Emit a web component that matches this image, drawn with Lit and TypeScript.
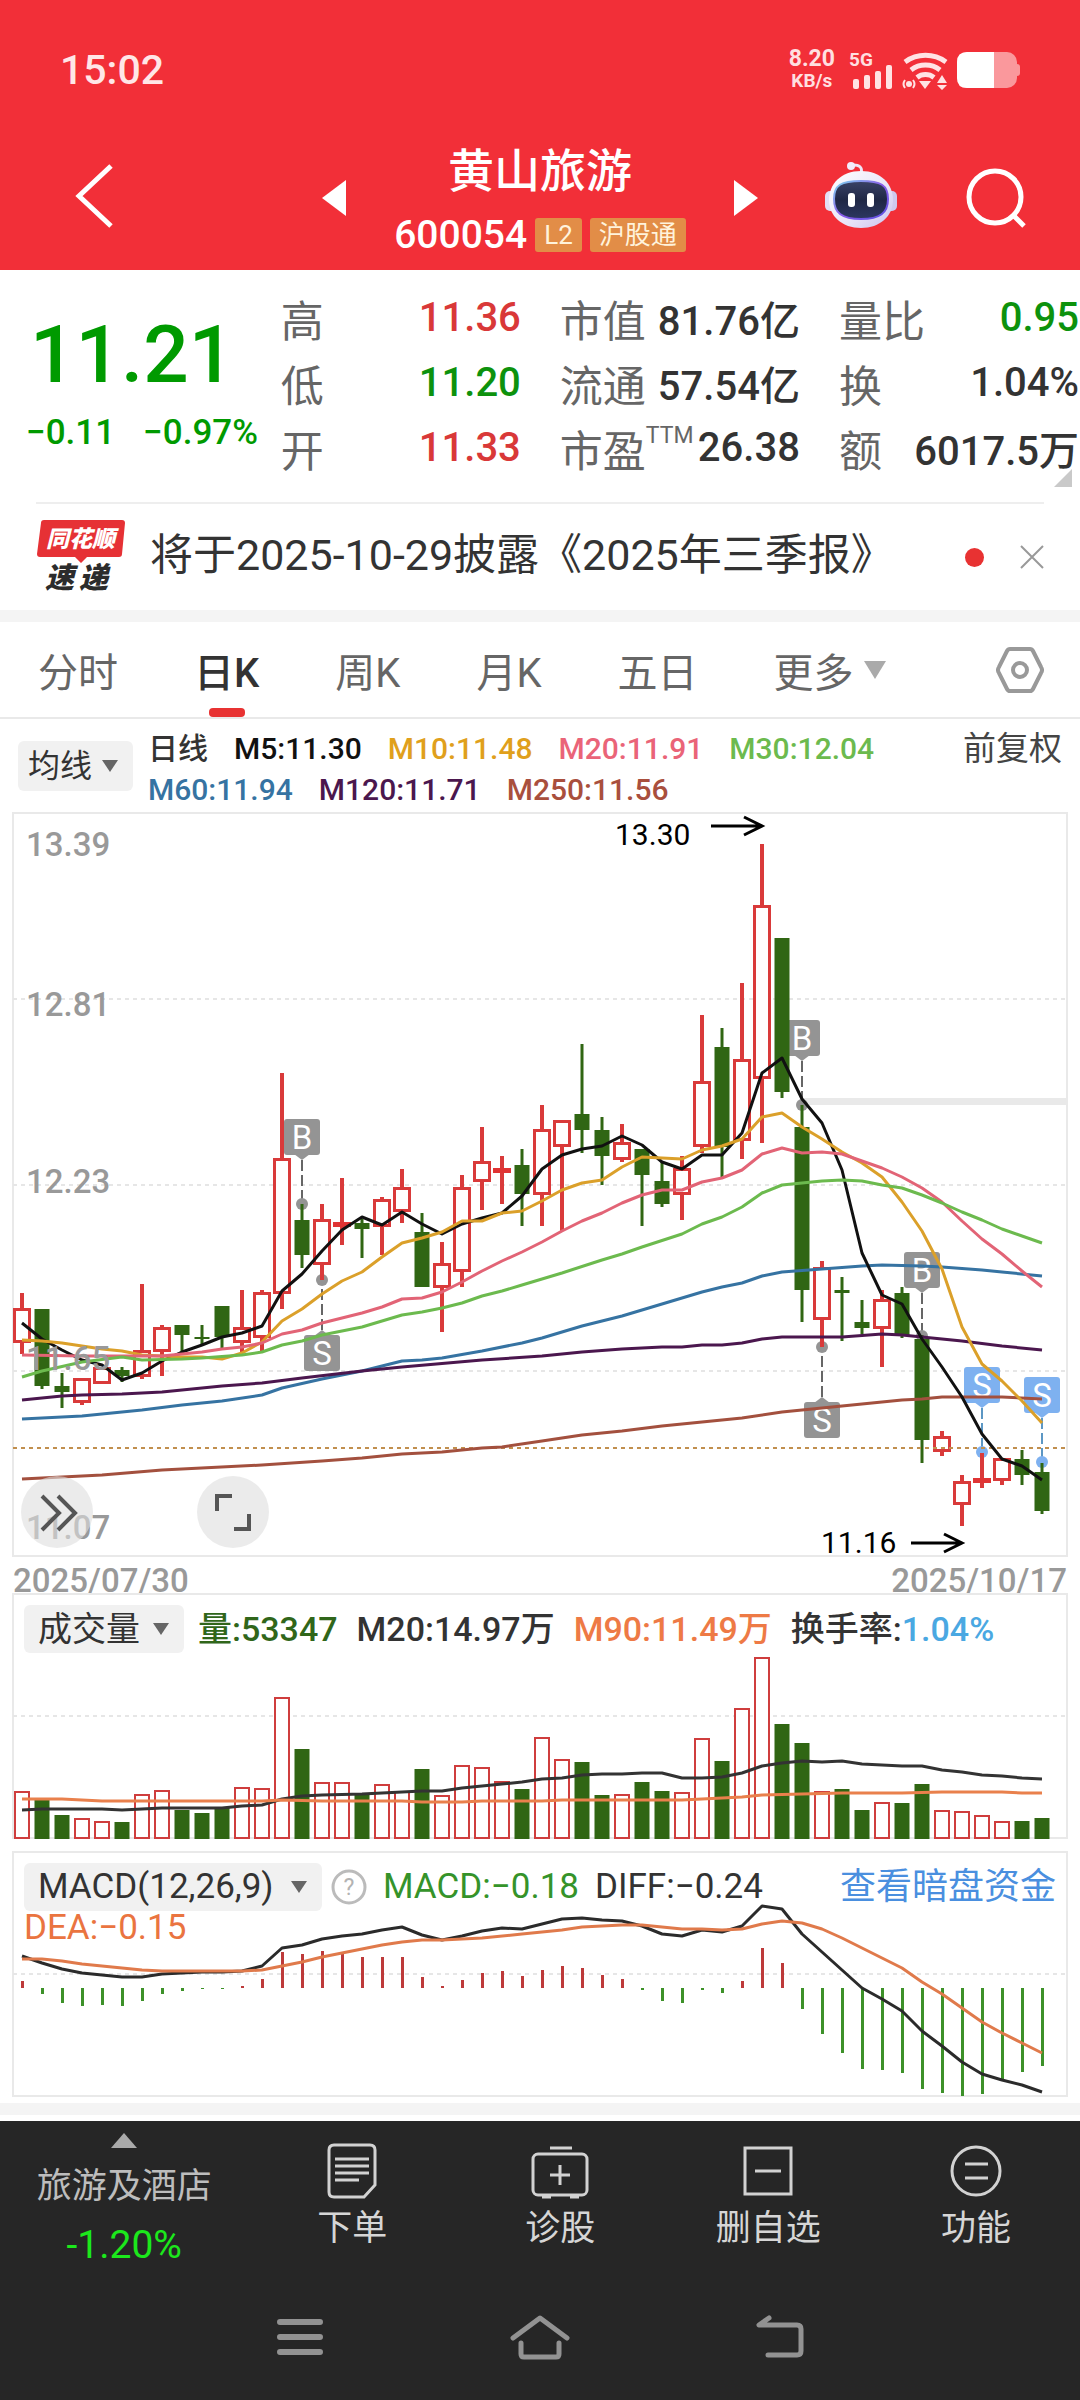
import { LitElement, html, svg, css } from "lit";
import { customElement } from "lit/decorators.js";

type Candle = [kind: "r" | "g", high: number, top: number, bottom: number, low: number];
type Point = [index: number, y: number];

const STEP = 20;
const cx = (i: number) => 22 + STEP * i;

const CANDLES: Candle[] = [
  ["r", 1293, 1308, 1343, 1354], ["g", 1309, 1309, 1386, 1389], ["g", 1373, 1386, 1392, 1408],
  ["r", 1378, 1378, 1403, 1405], ["r", 1367, 1367, 1384, 1384], ["g", 1367, 1370, 1376, 1382],
  ["r", 1284, 1350, 1377, 1379], ["r", 1325, 1327, 1352, 1376], ["g", 1325, 1325, 1335, 1353],
  ["g", 1325, 1337, 1339, 1344], ["g", 1306, 1306, 1337, 1348], ["r", 1290, 1327, 1343, 1352],
  ["r", 1290, 1292, 1338, 1353], ["r", 1073, 1158, 1294, 1309], ["g", 1204, 1220, 1255, 1268],
  ["r", 1204, 1219, 1265, 1280], ["r", 1178, 1222, 1227, 1245], ["g", 1219, 1223, 1229, 1258],
  ["r", 1197, 1199, 1227, 1255], ["r", 1169, 1187, 1212, 1223], ["g", 1213, 1232, 1287, 1287],
  ["r", 1242, 1263, 1288, 1332], ["r", 1175, 1187, 1272, 1287], ["r", 1127, 1161, 1182, 1210],
  ["r", 1156, 1168, 1173, 1204], ["g", 1149, 1165, 1194, 1226], ["r", 1105, 1129, 1195, 1226],
  ["r", 1120, 1120, 1147, 1231], ["g", 1044, 1114, 1130, 1153], ["g", 1117, 1130, 1156, 1185],
  ["r", 1124, 1142, 1160, 1162], ["g", 1149, 1149, 1175, 1226], ["g", 1162, 1181, 1204, 1207],
  ["r", 1156, 1168, 1195, 1220], ["r", 1015, 1081, 1147, 1153], ["g", 1028, 1047, 1147, 1177],
  ["r", 983, 1059, 1141, 1159], ["r", 844, 905, 1079, 1143], ["g", 938, 938, 1092, 1098],
  ["g", 1105, 1127, 1290, 1322], ["r", 1261, 1267, 1320, 1347], ["g", 1277, 1290, 1293, 1341],
  ["g", 1300, 1322, 1328, 1334], ["r", 1290, 1299, 1329, 1367], ["g", 1287, 1293, 1335, 1338],
  ["g", 1335, 1339, 1440, 1463], ["r", 1431, 1436, 1452, 1456], ["r", 1475, 1481, 1505, 1526],
  ["r", 1453, 1478, 1483, 1488], ["r", 1458, 1458, 1481, 1485], ["g", 1450, 1459, 1475, 1485],
  ["g", 1463, 1472, 1511, 1514],
];

const every = (...ys: number[]): Point[] => ys.map((y, i) => [i, y]);

const AVERAGES: { color: string; points: Point[] }[] = [
  {
    color: "#a3503e",
    points: [[0, 1479], [4, 1475], [7, 1470], [12, 1465], [15, 1461], [17, 1458], [19, 1454], [21, 1452],
      [23, 1448], [24, 1447], [26, 1441], [28, 1435], [30, 1431], [32, 1426], [34, 1422], [36, 1418],
      [38, 1412], [40, 1408], [42, 1404], [44, 1400], [45, 1399], [46, 1397], [49, 1397], [51, 1399]],
  },
  {
    color: "#3673a2",
    points: [[0, 1419], [3, 1416], [6, 1410], [8, 1405], [10, 1401], [12, 1395], [13, 1388], [15, 1379],
      [17, 1371], [19, 1361], [20, 1360], [21, 1358], [23, 1351], [25, 1343], [26, 1338], [28, 1326],
      [30, 1316], [32, 1304], [34, 1292], [35, 1287], [36, 1283], [37, 1276], [38, 1272], [40, 1269],
      [42, 1266], [43, 1265], [45, 1266], [46, 1267], [48, 1270], [49, 1272], [51, 1276]],
  },
  {
    color: "#4b174e",
    points: [[0, 1400], [2, 1396], [3, 1395], [5, 1394], [7, 1392], [10, 1386], [12, 1383], [14, 1378],
      [17, 1371], [19, 1367], [23, 1360], [26, 1356], [28, 1352], [30, 1349], [32, 1347], [33, 1347],
      [34, 1345], [35, 1345], [36, 1343], [37, 1339], [38, 1337], [41, 1337], [43, 1334], [44, 1335],
      [45, 1337], [47, 1341], [49, 1346], [51, 1350]],
  },
  {
    color: "#111111",
    points: every(1323, 1339, 1350, 1360, 1365, 1380, 1373, 1361, 1352, 1345, 1337, 1333, 1326, 1291, 1274,
      1251, 1230, 1217, 1225, 1212, 1224, 1234, 1224, 1218, 1213, 1196, 1169, 1155, 1149, 1146, 1136, 1145,
      1162, 1169, 1155, 1155, 1133, 1073, 1058, 1099, 1123, 1170, 1253, 1295, 1304, 1339, 1367, 1397, 1434,
      1459, 1466, 1480),
  },
  {
    color: "#dba02a",
    points: every(1340, 1341, 1343, 1346, 1349, 1351, 1355, 1356, 1357, 1357, 1359, 1353, 1342, 1321, 1309,
      1294, 1281, 1272, 1257, 1243, 1238, 1232, 1221, 1221, 1213, 1211, 1201, 1190, 1183, 1180, 1167, 1157,
      1158, 1159, 1150, 1146, 1139, 1117, 1113, 1127, 1139, 1152, 1163, 1177, 1202, 1231, 1269, 1327, 1364,
      1381, 1401, 1423),
  },
  {
    color: "#e26476",
    points: [[0, 1355], [3, 1356], [7, 1356], [8, 1354], [9, 1352], [10, 1349], [11, 1347], [12, 1343],
      [13, 1334], [14, 1330], [15, 1323], [17, 1313], [18, 1307], [19, 1299], [20, 1298], [21, 1292],
      [22, 1282], [23, 1271], [24, 1261], [25, 1252], [26, 1242], [27, 1231], [28, 1221], [29, 1213],
      [30, 1203], [31, 1195], [32, 1190], [33, 1190], [34, 1182], [35, 1178], [36, 1170], [37, 1154],
      [38, 1148], [39, 1153], [40, 1152], [41, 1154], [42, 1161], [43, 1168], [44, 1177], [45, 1188],
      [46, 1202], [47, 1221], [48, 1239], [49, 1254], [50, 1271], [51, 1287]],
  },
  {
    color: "#6cba4e",
    points: [[0, 1377], [1, 1371], [3, 1362], [5, 1357], [6, 1360], [8, 1359], [9, 1358], [11, 1355],
      [12, 1352], [13, 1345], [14, 1341], [15, 1335], [17, 1327], [18, 1321], [19, 1315], [20, 1312],
      [21, 1308], [22, 1303], [23, 1296], [24, 1291], [25, 1285], [26, 1279], [27, 1273], [29, 1260],
      [30, 1254], [31, 1247], [33, 1234], [34, 1224], [35, 1217], [36, 1207], [37, 1193], [38, 1185],
      [39, 1183], [40, 1181], [41, 1180], [42, 1181], [43, 1185], [44, 1188], [45, 1195], [46, 1203],
      [47, 1212], [48, 1220], [49, 1229], [50, 1236], [51, 1243]],
  },
];

const TRADES: { i: number; side: "B" | "S"; box: number; dot: number; blue?: boolean }[] = [
  { i: 14, side: "B", box: 1119, dot: 1204 },
  { i: 15, side: "S", box: 1335, dot: 1280 },
  { i: 39, side: "B", box: 1020, dot: 1105 },
  { i: 40, side: "S", box: 1402, dot: 1347 },
  { i: 45, side: "B", box: 1252, dot: 1336 },
  { i: 48, side: "S", box: 1367, dot: 1452, blue: true },
  { i: 51, side: "S", box: 1377, dot: 1462, blue: true },
];

const VOLUME_TOPS = [
  1791, 1800, 1815, 1818, 1821, 1822, 1794, 1790, 1810, 1813, 1808, 1787, 1788, 1697, 1749, 1782, 1782, 1795,
  1784, 1791, 1769, 1795, 1765, 1767, 1781, 1789, 1737, 1759, 1762, 1795, 1794, 1782, 1791, 1792, 1738, 1761,
  1708, 1657, 1724, 1743, 1791, 1789, 1810, 1802, 1803, 1784, 1810, 1811, 1815, 1821, 1821, 1818,
];
const VOLUME_M20: Point[] = [
  [0, 1810], [1, 1809], [4, 1809], [5, 1810], [7, 1808], [10, 1808], [11, 1806], [12, 1805], [13, 1799],
  [14, 1796], [15, 1795], [17, 1794], [18, 1793], [20, 1791], [21, 1791], [22, 1788], [24, 1784], [25, 1782],
  [26, 1779], [27, 1778], [28, 1775], [29, 1774], [30, 1774], [31, 1773], [32, 1773], [33, 1778], [34, 1778],
  [35, 1777], [36, 1773], [37, 1766], [38, 1763], [39, 1761], [40, 1762], [41, 1761], [42, 1764], [44, 1766],
  [45, 1766], [46, 1770], [47, 1772], [48, 1775], [49, 1776], [50, 1778], [51, 1779],
];
const VOLUME_M90: Point[] = [
  [0, 1799], [2, 1799], [4, 1801], [12, 1801], [13, 1800], [15, 1801], [19, 1801], [20, 1802], [22, 1802],
  [23, 1801], [26, 1801], [27, 1800], [33, 1800], [34, 1799], [36, 1797], [37, 1795], [39, 1794], [41, 1793],
  [44, 1793], [46, 1792], [49, 1792], [50, 1793], [51, 1793],
];

const MACD_ZERO = 1988;
const MACD_ENDS = [
  1981, 1994, 2003, 2006, 2005, 2006, 2001, 1994, 1991, 1989, 1989, 1986, 1979, 1952, 1954, 1951, 1954, 1957,
  1957, 1957, 1977, 1986, 1980, 1973, 1971, 1976, 1970, 1966, 1968, 1975, 1979, 1990, 2001, 2003, 1990, 1993,
  1981, 1948, 1963, 2009, 2034, 2053, 2069, 2070, 2073, 2089, 2093, 2096, 2094, 2081, 2072, 2066,
];
const DIFF = every(1956, 1963, 1969, 1973, 1975, 1977, 1977, 1974, 1973, 1972, 1972, 1971, 1966, 1948, 1945,
  1939, 1936, 1934, 1930, 1927, 1935, 1940, 1936, 1931, 1928, 1929, 1924, 1919, 1918, 1920, 1921, 1926, 1934,
  1936, 1930, 1932, 1926, 1906, 1909, 1934, 1952, 1970, 1988, 1999, 2011, 2031, 2046, 2062, 2074, 2080, 2085,
  2092);
const DEA: Point[] = [
  [0, 1959], [1, 1959], [2, 1961], [3, 1964], [4, 1966], [5, 1968], [6, 1970], [7, 1971], [11, 1971],
  [12, 1970], [13, 1966], [14, 1962], [15, 1957], [16, 1953], [17, 1949], [18, 1945], [19, 1942], [20, 1940],
  [21, 1940], [23, 1938], [25, 1934], [27, 1930], [28, 1927], [30, 1925], [31, 1925], [32, 1927], [33, 1929],
  [34, 1929], [35, 1930], [36, 1929], [37, 1924], [38, 1921], [39, 1923], [40, 1929], [41, 1938], [42, 1948],
  [43, 1958], [44, 1968], [45, 1982], [46, 1994], [47, 2008], [48, 2022], [49, 2033], [50, 2043], [51, 2053],
];

const polyline = (points: Point[], color: string, width = 3) => svg`
  <polyline points=${points.map(([i, y]) => `${cx(i)},${y}`).join(" ")} fill="none" stroke=${color}
    stroke-width=${width} stroke-linejoin="round"></polyline>`;

const gridLine = (y: number) => svg`
  <line x1="13" x2="1067" y1=${y} y2=${y} stroke="#e6e6e6" stroke-width="2" stroke-dasharray="4 4"></line>`;

const frame = (top: number, bottom: number) => svg`
  <rect x="13" y=${top} width="1054" height=${bottom - top} fill="none" stroke="#e9e9e9" stroke-width="2"></rect>`;

const reset = css`
  :host {
    display: block;
  }
  button,
  select {
    margin: 0;
    padding: 0;
    border: 0;
    background: none;
    color: inherit;
    font: inherit;
  }
  a {
    color: inherit;
    text-decoration: none;
  }
  svg {
    display: block;
  }
`;

const picker = css`
  .picker {
    display: grid;
    align-items: center;
    border-radius: 6px;
    background: #f1f1f1;
    color: #333;
  }
  .picker select {
    grid-area: 1 / 1;
    height: 48px;
    appearance: none;
    outline: none;
  }
  .picker svg {
    grid-area: 1 / 1;
    justify-self: end;
    margin-right: 14px;
    pointer-events: none;
  }
`;

const pickerArrow = html`<svg width="18" height="14" viewBox="0 0 18 14" aria-hidden="true">
  <path d="M1 1h16L9 13z" fill="#666"></path>
</svg>`;

@customElement("stock-header")
class StockHeader extends LitElement {
  static styles = [
    reset,
    css`
      :host {
        background: #f22f38;
        color: #fff;
      }
      .status {
        display: flex;
        align-items: center;
        justify-content: space-between;
        height: 140px;
        padding: 0 56px 0 60px;
      }
      .time {
        font-size: 41px;
        font-weight: 500;
        color: #ffe6e7;
      }
      .tray {
        display: flex;
        align-items: center;
        gap: 13px;
        color: #ffdfe0;
        font-weight: 700;
      }
      .speed {
        display: flex;
        flex-direction: column;
        align-items: center;
        font-size: 23px;
        line-height: 22px;
      }
      .speed .unit {
        font-size: 19px;
      }
      .bar {
        display: grid;
        grid-template-columns: 1fr auto 1fr;
        height: 130px;
      }
      .icon {
        display: grid;
        place-items: center;
        height: 116px;
      }
      .left {
        padding-left: 66px;
      }
      .right {
        display: flex;
        justify-content: flex-end;
        gap: 61px;
        padding-right: 47px;
      }
      .switch {
        display: flex;
        gap: 48px;
      }
      .name {
        display: flex;
        flex-direction: column;
        align-items: center;
      }
      .title {
        margin: 0;
        font-size: 46px;
        font-weight: 500;
        line-height: 62px;
      }
      .code {
        display: flex;
        align-items: center;
        gap: 8px;
        height: 66px;
        font-size: 39px;
        font-weight: 500;
      }
      .tag {
        padding: 0 9px;
        border-radius: 3px;
        background: #e28d47;
        color: #fff3dc;
        font-size: 26px;
        font-weight: 400;
        line-height: 34px;
      }
    `,
  ];

  render() {
    return html`
      <div class="status">
        <span class="time">15:02</span>
        <div class="tray">
          <span class="speed"><span>8.20</span><span class="unit">KB/s</span></span>
          <svg width="176" height="44" viewBox="848 49 176 44" aria-label="5G">
            <text x="849" y="67" font-size="19" fill="#ffdfe0">5G</text>
            <g fill="#ffe3e4">
              <rect x="853" y="80" width="6" height="10" rx="2"></rect>
              <rect x="864" y="76" width="6" height="14" rx="2"></rect>
              <rect x="875" y="72" width="6" height="18" rx="2"></rect>
              <rect x="886" y="66" width="6" height="24" rx="2"></rect>
              <path d="M919 82h12l-6 8z"></path>
              <path d="M937 84l5-8 5 8zM937 86h10l-5 5z"></path>
              <circle cx="909" cy="85" r="3"></circle>
            </g>
            <g fill="none" stroke="#ffe3e4" stroke-width="5">
              <path d="M905 63A35 35 0 0 1 946 63"></path>
              <path d="M911 71A24 24 0 0 1 940 71"></path>
              <path d="M917 78.500A14 14 0 0 1 934 78.500"></path>
            </g>
            <path d="M905 81q-3 4 0 8M913 81q3 4 0 8" fill="none" stroke="#ffe3e4" stroke-width="2"></path>
            <rect x="957" y="53" width="60" height="36" rx="10" fill="#fa989c"></rect>
            <path d="M1017 65q3 0 3 3v6q0 3-3 3z" fill="#fa989c"></path>
            <path d="M967 53h27v36h-27q-10 0-10-10v-16q0-10 10-10z" fill="#fff"></path>
          </svg>
        </div>
      </div>
      <header class="bar">
        <div class="left">
          <button class="icon" aria-label="返回">
            <svg width="56" height="70" viewBox="66 163 56 70">
              <path d="M111 166L79 196l32 30" fill="none" stroke="#fff" stroke-width="5"></path>
            </svg>
          </button>
        </div>
        <div class="switch">
          <button class="icon" aria-label="上一只">
            <svg width="24" height="36" viewBox="0 0 24 36"><path d="M24 0v36L0 18z" fill="#fff"></path></svg>
          </button>
          <div class="name">
            <h1 class="title">黄山旅游</h1>
            <div class="code">
              <span>600054</span><span class="tag">L2</span><span class="tag">沪股通</span>
            </div>
          </div>
          <button class="icon" aria-label="下一只">
            <svg width="24" height="36" viewBox="0 0 24 36"><path d="M0 0v36l24-18z" fill="#fff"></path></svg>
          </button>
        </div>
        <div class="right">
          <button class="icon" aria-label="智能助手">
            <svg width="76" height="76" viewBox="823 160 76 76">
              <defs>
                <linearGradient id="shell" x1="0" y1="0" x2="1" y2="1">
                  <stop offset="0" stop-color="#ffffff"></stop>
                  <stop offset="0.600" stop-color="#e9e4f8"></stop>
                  <stop offset="1" stop-color="#c9c2ee"></stop>
                </linearGradient>
                <linearGradient id="rim" x1="0" y1="0" x2="1" y2="1">
                  <stop offset="0" stop-color="#7fd6ee"></stop>
                  <stop offset="0.500" stop-color="#8a5be8"></stop>
                  <stop offset="1" stop-color="#5a4fe0"></stop>
                </linearGradient>
                <linearGradient id="visor" x1="0" y1="0" x2="0" y2="1">
                  <stop offset="0" stop-color="#3a4266"></stop>
                  <stop offset="0.500" stop-color="#1f2745"></stop>
                  <stop offset="1" stop-color="#2c3760"></stop>
                </linearGradient>
              </defs>
              <path d="M861 174q3-10-10-9" fill="none" stroke="#efe6f6" stroke-width="3"></path>
              <circle cx="851" cy="166" r="4" fill="#f3ecfb"></circle>
              <rect x="825" y="191" width="12" height="20" rx="5" fill="#e3def5"></rect>
              <rect x="885" y="191" width="12" height="20" rx="5" fill="#cfc9ee"></rect>
              <path d="M861 171c20 0 32 13 32 29s-13 28-32 28-32-12-32-28 12-29 32-29z" fill="url(#shell)"></path>
              <path d="M861 181c20 0 27 4 27 18s-8 20-27 20-27-6-27-20 7-18 27-18z" fill="url(#visor)"
                stroke="url(#rim)" stroke-width="2"></path>
              <rect x="848" y="193" width="7" height="14" rx="3" fill="#fff"></rect>
              <rect x="867" y="193" width="7" height="14" rx="3" fill="#fff"></rect>
            </svg>
          </button>
          <button class="icon" aria-label="搜索">
            <svg width="73" height="66" viewBox="960 165 73 66">
              <circle cx="995" cy="197" r="26" fill="none" stroke="#fff" stroke-width="5"></circle>
              <path d="M1012 214l12 12" stroke="#fff" stroke-width="5"></path>
            </svg>
          </button>
        </div>
      </header>
    `;
  }
}

@customElement("quote-panel")
class QuotePanel extends LitElement {
  static styles = [
    reset,
    css`
      .quote {
        position: relative;
        display: grid;
        grid-template-columns: 26% 1fr;
        padding: 15px 0 22px;
      }
      .price {
        display: flex;
        flex-direction: column;
        padding-left: 26px;
        color: #009a00;
        font-weight: 500;
      }
      .last {
        padding-left: 4px;
        font-size: 80px;
        line-height: 140px;
      }
      .change {
        display: flex;
        gap: 28px;
        font-size: 35px;
        line-height: 16px;
      }
      .stats {
        display: grid;
        grid-template-columns: repeat(3, 1fr);
        grid-auto-rows: 65px;
        column-gap: 39px;
        margin: 0;
        padding-right: 1px;
        font-size: 40px;
      }
      .stat {
        display: flex;
        align-items: center;
        justify-content: space-between;
        white-space: nowrap;
      }
      .stat dt {
        display: flex;
        color: #666;
        font-size: 43px;
      }
      .ttm {
        font-size: 23px;
        line-height: 38px;
      }
      .stat dd {
        margin: 0;
        color: #333;
        font-weight: 500;
      }
      .stat .up {
        color: #d93838;
      }
      .stat .down {
        color: #0d920d;
      }
      .fold {
        position: absolute;
        right: 8px;
        bottom: 15px;
      }
      .news {
        display: flex;
        align-items: center;
        height: 108px;
        margin: 0 36px;
        border-top: 2px solid #eee;
        box-sizing: border-box;
      }
      .news a {
        flex: 1;
        margin-left: 22px;
        color: #333;
        font-size: 43px;
        line-height: 50px;
        padding-bottom: 4px;
        white-space: nowrap;
      }
      .dot {
        width: 19px;
        height: 19px;
        margin-right: 36px;
        border-radius: 50%;
        background: #e83232;
      }
      .logo {
        font-family: "Noto Sans CJK SC", sans-serif;
        font-weight: 900;
        font-style: italic;
      }
    `,
  ];

  render() {
    const stats: [string, string, string, string][] = [
      ["高", "", "11.36", "up"], ["市值", "", "81.76亿", ""], ["量比", "", "0.95", "down"],
      ["低", "", "11.20", "down"], ["流通", "", "57.54亿", ""], ["换", "", "1.04%", ""],
      ["开", "", "11.33", "up"], ["市盈", "TTM", "26.38", ""], ["额", "", "6017.5万", ""],
    ];
    return html`
      <section class="quote">
        <div class="price">
          <span class="last">11.21</span>
          <span class="change"><span>−0.11</span><span>−0.97%</span></span>
        </div>
        <dl class="stats">
          ${stats.map(
            ([label, note, value, tone]) => html`<div class="stat">
              <dt>${label}<span class="ttm">${note}</span></dt>
              <dd class=${tone}>${value}</dd>
            </div>`
          )}
        </dl>
        <svg class="fold" width="18" height="18" viewBox="0 0 18 18"><path d="M18 0v18H0z" fill="#c9c9c9"></path></svg>
      </section>
      <section class="news">
        <svg class="logo" width="92" height="78" viewBox="36 518 92 78" aria-label="同花顺速递">
          <path d="M44 520h78q3 0 3 3l-3 31q0 3-3 3H87l-6 6-6-6H40q-3 0-3-3l4-31q0-3 3-3z" fill="#e63135"></path>
          <text x="46" y="547" font-size="23" fill="#fff">同花顺</text>
          <text x="45" y="588" font-size="29" fill="#2c2c2c">速</text>
          <text x="79" y="588" font-size="29" fill="#2c2c2c">递</text>
        </svg>
        <a href="#report">将于2025-10-29披露《2025年三季报》</a>
        <span class="dot"></span>
        <button aria-label="关闭">
          <svg width="24" height="24" viewBox="0 0 24 24">
            <path d="M1 1l22 22M23 1L1 23" stroke="#999" stroke-width="2"></path>
          </svg>
        </button>
      </section>
    `;
  }
}

@customElement("period-tabs")
class PeriodTabs extends LitElement {
  static styles = [
    reset,
    css`
      .tabs {
        display: flex;
        align-items: stretch;
        gap: 76px;
        height: 95px;
        padding: 0 36px 0 38px;
        border-top: 12px solid #f4f4f4;
        border-bottom: 2px solid #e9e9e9;
        color: #666;
        font-size: 40px;
        white-space: nowrap;
      }
      .tab {
        display: grid;
        grid-template-rows: 1fr 9px;
        place-items: center;
        padding-top: 9px;
        box-sizing: border-box;
      }
      .active {
        color: #333;
        font-weight: 500;
      }
      .active::after {
        content: "";
        width: 36px;
        height: 9px;
        border-radius: 4px;
        background: #e83232;
      }
      .label {
        display: flex;
        align-items: center;
        gap: 10px;
      }
      .settings {
        margin-left: auto;
      }
    `,
  ];

  render() {
    const tabs = ["分时", "日K", "周K", "月K", "五日"];
    return html`
      <nav class="tabs">
        ${tabs.map(
          (tab) => html`<button class=${tab === "日K" ? "tab active" : "tab"}><span class="label">${tab}</span></button>`
        )}
        <button class="tab">
          <span class="label">更多
            <svg width="22" height="18" viewBox="0 0 22 18"><path d="M0 0h22L11 18z" fill="#aaa"></path></svg>
          </span>
        </button>
        <button class="settings" aria-label="设置">
          <svg width="48" height="48" viewBox="0 0 48 48" fill="none" stroke="#999" stroke-width="4">
            <path d="M14 3h20q2 0 3 2l8 16q2 3 0 6l-8 16q-1 2-3 2H14q-2 0-3-2L3 27q-2-3 0-6l8-16q1-2 3-2z"></path>
            <circle cx="24" cy="24" r="7"></circle>
          </svg>
        </button>
      </nav>
    `;
  }
}

@customElement("price-chart")
class PriceChart extends LitElement {
  static styles = [
    reset,
    picker,
    css`
      .legend {
        display: flex;
        align-items: flex-start;
        padding: 9px 18px 2px;
        height: 82px;
      }
      .picker {
        margin-top: 13px;
      }
      .picker select {
        height: 50px;
        padding: 0 40px 0 10px;
        font-size: 32px;
      }
      .averages {
        display: flex;
        flex: 1;
        flex-wrap: wrap;
        column-gap: 26px;
        margin-left: 15px;
        font-size: 30px;
        font-weight: 500;
        line-height: 41px;
        white-space: nowrap;
      }
      .adjust {
        color: #444;
        font-size: 33px;
        line-height: 41px;
      }
      .m0 { color: #333; }
      .m5 { color: #111; }
      .m10 { color: #e0a01c; }
      .m20 { color: #ea6478; }
      .m30 { color: #6cba4e; }
      .m60 { color: #3673a2; }
      .m120 { color: #4b174e; }
      .m250 { color: #a94f3d; }
      .plot {
        position: relative;
      }
      .plot > svg {
        width: 100%;
        overflow: visible;
      }
      .tool {
        position: absolute;
        bottom: 9px;
        width: 72px;
        height: 72px;
        border-radius: 50%;
        background: rgba(222, 222, 222, 0.6);
      }
      .expand {
        left: 21px;
      }
      .full {
        left: 197px;
      }
      .dates {
        display: flex;
        justify-content: space-between;
        height: 36px;
        padding: 0 13px;
        color: #999;
        font-size: 33px;
        font-weight: 500;
        line-height: 48px;
      }
    `,
  ];

  private candle([kind, high, top, bottom, low]: Candle, i: number) {
    const x = cx(i);
    if (kind === "g") {
      return svg`
        <rect x=${x - 1.5} y=${high} width="3" height=${low - high} fill="#306613"></rect>
        <rect x=${x - 7.5} y=${top} width="15" height=${bottom - top} fill="#306613"></rect>`;
    }
    const thin = bottom - top < 7;
    return svg`
      <rect x=${x - 2} y=${high} width="4" height=${top - high + 1} fill="#d93a3a"></rect>
      <rect x=${x - 2} y=${bottom - 1} width="4" height=${low - bottom + 1} fill="#d93a3a"></rect>
      ${thin
        ? svg`<rect x=${x - 9} y=${top} width="18" height=${bottom - top} fill="#e03434"></rect>`
        : svg`<rect x=${x - 7.5} y=${top + 1.5} width="15" height=${bottom - top - 3} fill="#fff"
            stroke="#d93a3a" stroke-width="3"></rect>`}`;
  }

  private trade({ i, side, box, dot, blue }: (typeof TRADES)[number]) {
    const x = cx(i);
    const fill = blue ? "#7eb1f0" : "#949494";
    const above = box < dot;
    const tip = above ? box + 41 : box - 5;
    const base = above ? box + 35 : box + 1;
    return svg`
      <line x1=${x} x2=${x} y1=${tip} y2=${dot} stroke=${blue ? "#5c97c4" : "#666"} stroke-width="2"
        stroke-dasharray="11 4"></line>
      <circle cx=${x} cy=${dot} r="6" fill=${fill}></circle>
      <path d=${`M${x - 8} ${base}H${x + 8}L${x} ${tip}z`} fill=${fill}></path>
      <rect x=${x - 18} y=${box} width="36" height="36" rx="3" fill=${fill}></rect>
      <text x=${x} y=${box + 30} font-size="33" text-anchor="middle" fill="#fff">${side}</text>`;
  }

  render() {
    const averages = [
      ["m0", "日线"], ["m5", "M5:11.30"], ["m10", "M10:11.48"], ["m20", "M20:11.91"], ["m30", "M30:12.04"],
      ["m60", "M60:11.94"], ["m120", "M120:11.71"], ["m250", "M250:11.56"],
    ];
    const scale: [string, number][] = [
      ["13.39", 856], ["12.81", 1016], ["12.23", 1193], ["11.65", 1370], ["11.07", 1539],
    ];
    return html`
      <div class="legend">
        <div class="picker">
          <select aria-label="主图指标"><option>均线</option></select>${pickerArrow}
        </div>
        <div class="averages">${averages.map(([tone, text]) => html`<span class=${tone}>${text}</span>`)}</div>
        <button class="adjust">前复权</button>
      </div>
      <div class="plot">
        <svg viewBox="0 812 1080 745">
          ${frame(813, 1556)} ${[999, 1185, 1371].map(gridLine)}
          <rect x="802" y="1098" width="265" height="7" fill="#e9e9e9"></rect>
          ${TRADES.map((t) => this.trade(t))} ${CANDLES.map((c, i) => this.candle(c, i))}
          <line x1="13" x2="1067" y1="1448" y2="1448" stroke="#c18f4e" stroke-width="2" stroke-dasharray="4 4"></line>
          ${AVERAGES.map(({ color, points }) => polyline(points, color))}
          <g font-size="33" font-weight="500" fill="#999">
            ${scale.map(([label, y]) => svg`<text x="26" y=${y}>${label}</text>`)}
          </g>
          <g font-size="30" fill="#000">
            <text x="615" y="845">13.30</text>
            <text x="821" y="1553">11.16</text>
          </g>
          <path d="M711 826h50M744 817l18 9-18 9M911 1543h50M944 1534l18 9-18 9" fill="none" stroke="#000"
            stroke-width="3"></path>
        </svg>
        <button class="tool expand" aria-label="展开">
          <svg width="72" height="72" viewBox="0 0 72 72" fill="none" stroke="#555" stroke-width="4">
            <path d="M21 20l17 17-17 17M37 20l17 17-17 17"></path>
          </svg>
        </button>
        <button class="tool full" aria-label="全屏">
          <svg width="72" height="72" viewBox="0 0 72 72" fill="none" stroke="#555" stroke-width="4">
            <path d="M20 35V20h15M52 38v15H37"></path>
          </svg>
        </button>
      </div>
      <div class="dates"><span>2025/07/30</span><span>2025/10/17</span></div>
    `;
  }
}

@customElement("sub-charts")
class SubCharts extends LitElement {
  static styles = [
    reset,
    picker,
    css`
      .panel {
        display: grid;
      }
      .panel > svg {
        grid-area: 1 / 1;
        width: 100%;
      }
      .head {
        grid-area: 1 / 1;
        align-self: start;
        display: flex;
        align-items: center;
        margin: 12px 24px 0;
        line-height: 48px;
        white-space: nowrap;
        z-index: 1;
      }
      .volume .head {
        gap: 22px;
        font-size: 34px;
      }
      .volume .picker {
        margin-right: -8px;
      }
      .picker select {
        padding: 0 44px 0 14px;
        font-size: 34px;
      }
      .values {
        display: flex;
        gap: 19px;
        font-weight: 500;
      }
      .macd {
        margin-top: 11px;
      }
      .macd .head {
        flex-wrap: wrap;
        font-size: 35px;
      }
      .macd .picker select {
        padding-right: 48px;
        font-size: 35px;
      }
      .help {
        margin: 0 16px 0 9px;
      }
      .diff {
        margin-left: 16px;
      }
      .link {
        margin-left: auto;
        color: #4a8fdf;
        font-size: 36px;
      }
      .dea {
        flex-basis: 100%;
        line-height: 34px;
        color: #ea7440;
      }
      .vol { color: #30661a; }
      .dark { color: #333; }
      .orange { color: #ee7a45; }
      .blue { color: #4aa8e2; }
      .green { color: #35932a; }
      .end {
        height: 12px;
        margin: 6px 0;
        background: #f4f4f4;
      }
    `,
  ];

  render() {
    return html`
      <section class="panel volume">
        <svg viewBox="0 1593 1080 247">
          ${frame(1594, 1838)} ${gridLine(1716)}
          ${VOLUME_TOPS.map((top, i) =>
            CANDLES[i][0] === "g"
              ? svg`<rect x=${cx(i) - 7.5} y=${top} width="15" height=${1839 - top} fill="#306613"></rect>`
              : svg`<rect x=${cx(i) - 7} y=${top + 1} width="14" height=${1837 - top} fill="#fff"
                  stroke="#cf3d3d" stroke-width="2"></rect>`
          )}
          ${polyline(VOLUME_M20, "#333")} ${polyline(VOLUME_M90, "#e9804c")}
        </svg>
        <div class="head">
          <div class="picker">
            <select aria-label="副图指标"><option>成交量</option></select>${pickerArrow}
          </div>
          <div class="values">
            <span class="vol">量:53347</span>
            <span class="dark">M20:14.97万</span>
            <span class="orange">M90:11.49万</span>
            <span class="dark">换手率:<span class="blue">1.04%</span></span>
          </div>
        </div>
      </section>
      <section class="panel macd">
        <svg viewBox="0 1851 1080 246">
          ${frame(1852, 2096)} ${gridLine(1974)}
          ${MACD_ENDS.map(
            (y, i) => svg`<rect x=${cx(i) - 1} y=${Math.min(y, MACD_ZERO)} width="3"
              height=${Math.abs(y - MACD_ZERO)} fill=${y < MACD_ZERO ? "#bd3a3a" : "#3d9129"}></rect>`
          )}
          ${polyline(DIFF, "#2b2b2b")} ${polyline(DEA, "#e07a4b")}
        </svg>
        <div class="head">
          <div class="picker">
            <select aria-label="副图指标"><option>MACD(12,26,9)</option></select>${pickerArrow}
          </div>
          <button class="help" aria-label="指标说明">
            <svg width="36" height="36" viewBox="0 0 36 36">
              <circle cx="18" cy="18" r="16" fill="#fff" stroke="#bbb" stroke-width="3"></circle>
              <text x="18" y="26" font-size="23" text-anchor="middle" fill="#b3b3b3">?</text>
            </svg>
          </button>
          <span class="green">MACD:−0.18</span>
          <span class="dark diff">DIFF:−0.24</span>
          <a class="link" href="#funds">查看暗盘资金</a>
          <span class="dea">DEA:−0.15</span>
        </div>
      </section>
      <div class="end"></div>
    `;
  }
}

@customElement("bottom-bar")
class BottomBar extends LitElement {
  static styles = [
    reset,
    css`
      :host {
        background: #262626;
        color: #d6d6d6;
      }
      .actions {
        display: grid;
        grid-template-columns: 23% repeat(4, 1fr);
        height: 156px;
        font-size: 35px;
        white-space: nowrap;
      }
      .item {
        display: flex;
        flex-direction: column;
        align-items: center;
        gap: 10px;
        padding-top: 22px;
        line-height: 40px;
      }
      .sector {
        gap: 12px;
        padding-top: 12px;
        color: #bdbdbd;
        line-height: 54px;
      }
      .sector .name {
        height: 46px;
      }
      .sector .rate {
        color: #1ce81c;
        font-size: 39px;
      }
      .system {
        display: grid;
        grid-template-columns: repeat(3, 1fr);
        height: 120px;
        padding: 0 180px 3px;
      }
      .system button {
        display: grid;
        place-items: center;
      }
    `,
  ];

  render() {
    const actions = [
      {
        label: "下单",
        icon: svg`<path d="M12 2h36q5 0 5 5v35L42 54H12q-5 0-5-5V7q0-5 5-5zM13 16h34M13 23h34M13 30h34M13 37h24"></path>`,
      },
      {
        label: "诊股",
        icon: svg`<rect x="3" y="11" width="54" height="41" rx="5"></rect>
          <path d="M20 5h22M30 22v20M20 32h20M12 54h9M40 54h9"></path>`,
      },
      { label: "删自选", icon: svg`<rect x="7" y="5" width="46" height="46"></rect><path d="M17 28h26"></path>` },
      { label: "功能", icon: svg`<circle cx="30" cy="28" r="24"></circle><path d="M19 21h23M19 35h23"></path>` },
    ];
    return html`
      <nav class="actions">
        <button class="item sector">
          <svg width="26" height="15" viewBox="0 0 26 15"><path d="M13 0l13 15H0z" fill="#aaa"></path></svg>
          <span class="name">旅游及酒店</span>
          <span class="rate">-1.20%</span>
        </button>
        ${actions.map(
          ({ label, icon }) => html`<button class="item">
            <svg width="60" height="56" viewBox="0 0 60 56" fill="none" stroke="#d2d2d2" stroke-width="3">${icon}</svg>
            <span>${label}</span>
          </button>`
        )}
      </nav>
      <nav class="system">
        <button aria-label="最近任务">
          <svg width="46" height="36" viewBox="0 0 46 36" stroke="#929292" stroke-width="6" stroke-linecap="round">
            <path d="M3 3h40M3 18h40M3 33h40"></path>
          </svg>
        </button>
        <button aria-label="主页">
          <svg width="60" height="46" viewBox="0 0 60 46" fill="none" stroke="#929292" stroke-width="5"
            stroke-linecap="round" stroke-linejoin="round">
            <path d="M3 24L30 4l27 20M11 29v11q0 3 3 3h32q3 0 3-3V29"></path>
          </svg>
        </button>
        <button aria-label="返回">
          <svg width="50" height="46" viewBox="0 0 50 46" fill="none" stroke="#929292" stroke-width="5"
            stroke-linecap="round" stroke-linejoin="round">
            <path d="M14 4L4 11h38q4 0 4 4v22q0 4-4 4H13"></path>
          </svg>
        </button>
      </nav>
    `;
  }
}

@customElement("app-root")
class AppRoot extends LitElement {
  static styles = css`
    :host {
      display: block;
      background: #fff;
      font-family: Roboto, "Noto Sans CJK SC", sans-serif;
    }
  `;

  render() {
    return html`
      <stock-header></stock-header>
      <main>
        <quote-panel></quote-panel>
        <period-tabs></period-tabs>
        <price-chart></price-chart>
        <sub-charts></sub-charts>
      </main>
      <bottom-bar></bottom-bar>
    `;
  }
}
